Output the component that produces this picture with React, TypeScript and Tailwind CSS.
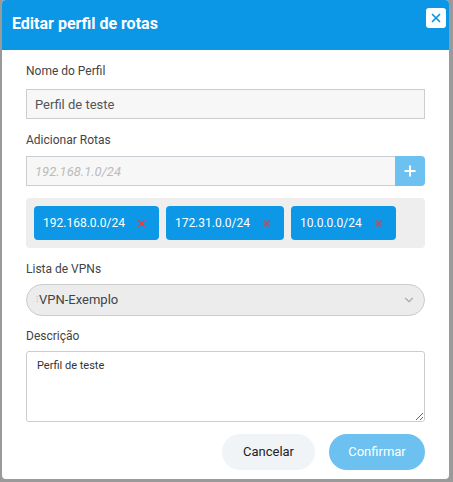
import { X, Plus, ChevronDown } from 'lucide-react';

const routes = ['192.168.0.0/24', '172.31.0.0/24', '10.0.0.0/24'];

export default function App() {
    return (
        <div className="h-[482px] w-[453px] bg-[#9a9a9a] pb-[3px] pl-[2px] pr-[4px] font-['Roboto',sans-serif]">
            <div className="flex h-full flex-col overflow-hidden rounded-[4px] bg-white">
                <div className="flex h-[50px] shrink-0 items-start justify-between bg-[#0b96e6] pl-[10px] pr-[3px]">
                    <h2 className="mt-[12px] text-[16px] font-bold text-white">Editar perfil de rotas</h2>
                    <button className="mt-[8px] flex h-[20px] w-[20px] items-center justify-center rounded-[3px] bg-white text-[#0b96e6]">
                        <X size={14} strokeWidth={3} />
                    </button>
                </div>

                <div className="flex flex-col px-[24px] pt-[12px]">
                    <label className="text-[12px] leading-[18px] text-[#444]">Nome do Perfil</label>
                    <input
                        type="text"
                        defaultValue="Perfil de teste"
                        className="mt-[9px] h-[30px] w-full border border-[#c9ced3] bg-[#f7f7f7] px-[8px] text-[13px] text-[#555] outline-none"
                    />

                    <label className="mt-[12px] text-[12px] leading-[18px] text-[#444]">Adicionar Rotas</label>
                    <div className="mt-[7px] flex h-[30px]">
                        <input
                            type="text"
                            placeholder="192.168.1.0/24"
                            className="h-full flex-1 border border-r-0 border-[#c9ced3] bg-[#f7f7f7] px-[8px] text-[13px] italic outline-none placeholder:text-[#bbb]"
                        />
                        <button className="flex h-full w-[30px] items-center justify-center rounded-r-[4px] bg-[#6cc1f0] text-white">
                            <Plus size={16} strokeWidth={3} />
                        </button>
                    </div>

                    <div className="mt-[12px] flex gap-[7px] rounded-[4px] bg-[#eeeeee] px-[8px] py-[8px]">
                        {routes.map((r) => (
                            <div key={r} className="flex h-[34px] items-center gap-[11px] rounded-[4px] bg-[#0c98e6] pl-[9px] pr-[12px] text-[12px] text-white">
                                <span>{r}</span>
                                <X size={11} strokeWidth={3} className="text-[#e0403f]" />
                            </div>
                        ))}
                    </div>

                    <label className="mt-[12px] text-[12px] leading-[18px] text-[#444]">Lista de VPNs</label>
                    <div className="mt-[6px] flex h-[32px] items-center rounded-full border border-[#ccc] bg-[#ececec] pl-[9px] pr-[8px] text-[13px] text-[#444]">
                        <span className="mr-[1px] text-[9px] text-[#bbb]">⁝</span>
                        <span className="flex-1">VPN-Exemplo</span>
                        <ChevronDown size={14} className="text-[#aaa]" />
                    </div>

                    <label className="mt-[11px] text-[12px] leading-[18px] text-[#444]">Descrição</label>
                    <textarea
                        defaultValue="Perfil de teste"
                        className="mt-[6px] h-[71px] w-full resize-y rounded-[3px] border border-[#ccc] bg-white px-[10px] py-[6px] text-[11px] text-[#333] outline-none"
                    />

                    <div className="mt-[12px] flex justify-end gap-[14px]">
                        <button className="h-[36px] w-[93px] rounded-full bg-[#f1f4f7] text-[13px] text-[#222]">Cancelar</button>
                        <button className="h-[36px] w-[96px] rounded-full bg-[#6cc1f0] text-[13px] text-white">Confirmar</button>
                    </div>
                </div>
            </div>
        </div>
    );
}
